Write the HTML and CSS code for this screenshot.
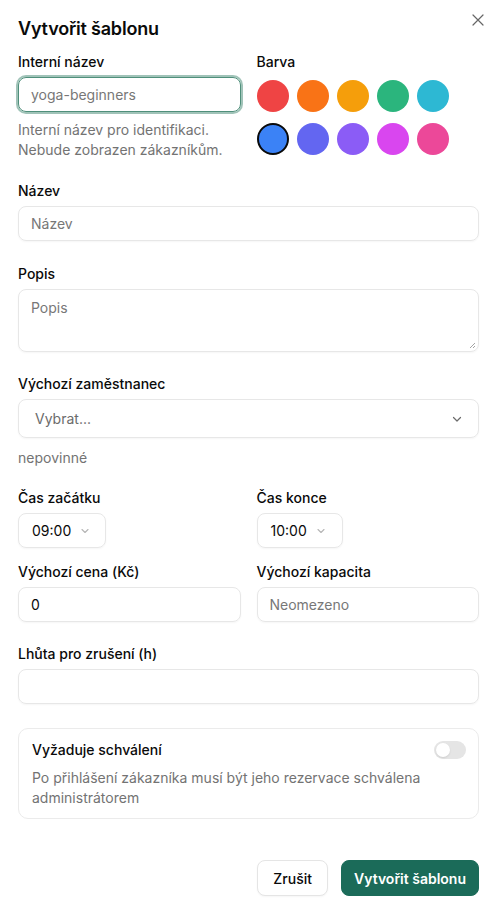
FILE: index.html
```html
<!DOCTYPE html>
<html lang="cs">
<head>
<meta charset="utf-8">
<link rel="stylesheet" href="styles.css">
</head>
<body>
<div class="dialog">
  <button class="close" aria-label="Zavřít">
    <svg width="14" height="14" viewBox="0 0 14 14"><path d="M2 2L12 12M12 2L2 12" stroke="#666" stroke-width="1.2" stroke-linecap="round" fill="none"/></svg>
  </button>
  <h1 class="title">Vytvořit šablonu</h1>

  <div class="top">
    <div class="col">
      <label class="label">Interní název</label>
      <div class="input focus"><span class="ph">yoga-beginners</span></div>
      <p class="help">Interní název pro identifikaci.<br>Nebude zobrazen zákazníkům.</p>
    </div>
    <div class="col">
      <label class="label">Barva</label>
      <div class="swatches">
        <span class="sw red"></span>
        <span class="sw orange"></span>
        <span class="sw amber"></span>
        <span class="sw green"></span>
        <span class="sw cyan"></span>
        <span class="sw blue selected"></span>
        <span class="sw indigo"></span>
        <span class="sw violet"></span>
        <span class="sw fuchsia"></span>
        <span class="sw pink"></span>
      </div>
    </div>
  </div>

  <div class="field f-nazev">
    <label class="label">Název</label>
    <div class="input"><span class="ph">Název</span></div>
  </div>

  <div class="field f-popis">
    <label class="label">Popis</label>
    <div class="textarea"><span class="ph">Popis</span>
      <svg class="grip" width="8" height="8" viewBox="0 0 8 8"><path d="M7 2L2 7M7 5L5 7" stroke="#9a9a9a" stroke-width="0.9" fill="none"/></svg>
    </div>
  </div>

  <div class="field f-emp">
    <label class="label">Výchozí zaměstnanec</label>
    <div class="select"><span class="ph2">Vybrat...</span>
      <svg width="12" height="12" viewBox="0 0 12 12"><path d="M2.5 4.5L6 8L9.5 4.5" stroke="#6b6b6b" stroke-width="1.2" fill="none" stroke-linecap="round" stroke-linejoin="round"/></svg>
    </div>
    <p class="muted">nepovinné</p>
  </div>

  <div class="row f-time">
    <div class="field">
      <label class="label">Čas začátku</label>
      <div class="time w1"><span>09:00</span>
        <svg width="10" height="10" viewBox="0 0 10 10"><path d="M2 3.5L5 6.5L8 3.5" stroke="#b5b5b5" stroke-width="1.1" fill="none" stroke-linecap="round" stroke-linejoin="round"/></svg>
      </div>
    </div>
    <div class="field">
      <label class="label">Čas konce</label>
      <div class="time w2"><span>10:00</span>
        <svg width="10" height="10" viewBox="0 0 10 10"><path d="M2 3.5L5 6.5L8 3.5" stroke="#b5b5b5" stroke-width="1.1" fill="none" stroke-linecap="round" stroke-linejoin="round"/></svg>
      </div>
    </div>
  </div>

  <div class="row f-price">
    <div class="field">
      <label class="label">Výchozí cena (Kč)</label>
      <div class="input"><span class="val">0</span></div>
    </div>
    <div class="field">
      <label class="label">Výchozí kapacita</label>
      <div class="input"><span class="ph">Neomezeno</span></div>
    </div>
  </div>

  <div class="field f-lhuta">
    <label class="label">Lhůta pro zrušení (h)</label>
    <div class="input"></div>
  </div>

  <div class="card">
    <div class="card-head">
      <span class="card-title">Vyžaduje schválení</span>
      <span class="toggle"><span class="knob"></span></span>
    </div>
    <p class="card-text">Po přihlášení zákazníka musí být jeho rezervace schválena administrátorem</p>
  </div>

  <div class="actions">
    <button class="btn secondary">Zrušit</button>
    <button class="btn primary">Vytvořit šablonu</button>
  </div>
</div>
</body>
</html>
```

FILE: styles.css
```css
* { box-sizing: border-box; }
html, body { margin: 0; padding: 0; background: #fff; }
body {
  font-family: Inter, "Noto Sans", sans-serif;
  color: #0a0a0a;
  font-size: 14px;
}
.dialog {
  position: relative;
  padding: 15px 18px 16px 18px;
  display: flex;
  flex-direction: column;
}
.close {
  position: absolute;
  top: 12px;
  right: 11px;
  width: 16px;
  height: 16px;
  padding: 0;
  border: 0;
  background: none;
  display: flex;
  align-items: center;
  justify-content: center;
}
.title {
  margin: 0;
  font-size: 18px;
  line-height: 28px;
  font-weight: 600;
  letter-spacing: -0.2px;
}
.top {
  margin-top: 9px;
  display: grid;
  grid-template-columns: 1fr 1fr;
  column-gap: 16px;
}
.col { display: flex; flex-direction: column; }
.label {
  display: block;
  font-size: 14px;
  line-height: 20px;
  height: 20px;
  font-weight: 500;
}
.input {
  margin-top: 5px;
  height: 35px;
  border: 1px solid #e7e7e7;
  border-radius: 8px;
  box-shadow: 0 1px 2px rgba(0,0,0,0.04);
  display: flex;
  align-items: center;
  padding: 0 12px;
  font-size: 14px;
}
.input.focus {
  border-color: #4f8f7b;
  box-shadow: 0 0 0 2px rgba(82,146,126,0.55);
}
.ph { color: #777; }
.val { color: #0a0a0a; }
.help {
  margin: 8px 0 0;
  color: #737373;
  font-size: 14px;
  line-height: 20px;
}
.swatches {
  margin-top: 8px;
  display: grid;
  grid-template-columns: repeat(5, 32px);
  column-gap: 8px;
  row-gap: 11px;
}
.sw {
  width: 32px;
  height: 32px;
  border-radius: 50%;
  display: block;
}
.red { background: #ef4444; }
.orange { background: #f97316; }
.amber { background: #f59e0b; }
.green { background: #2bb57d; }
.cyan { background: #2db8d3; }
.blue { background: #3b82f6; }
.indigo { background: #6366f1; }
.violet { background: #8b5cf6; }
.fuchsia { background: #d946ef; }
.pink { background: #ec4899; }
.sw.selected { border: 2px solid #0a0a0a; }

.field { display: flex; flex-direction: column; }
.f-nazev { margin-top: 21px; }
.f-popis { margin-top: 23px; }
.textarea {
  position: relative;
  margin-top: 5px;
  height: 63px;
  border: 1px solid #e7e7e7;
  border-radius: 8px;
  box-shadow: 0 1px 2px rgba(0,0,0,0.04);
  padding: 8px 12px;
  line-height: 20px;
}
.grip { position: absolute; right: 2px; bottom: 2px; }
.f-emp { margin-top: 22px; }
.select {
  margin-top: 5px;
  height: 39px;
  border: 1px solid #e7e7e7;
  border-radius: 8px;
  box-shadow: 0 1px 2px rgba(0,0,0,0.04);
  display: flex;
  align-items: center;
  justify-content: space-between;
  padding: 0 15px 0 16px;
}
.ph2 { color: #6b6b6b; }
.muted {
  margin: 10px 0 0;
  color: #737373;
  line-height: 20px;
}
.row {
  display: grid;
  grid-template-columns: 1fr 1fr;
  column-gap: 16px;
}
.f-time { margin-top: 20px; }
.time {
  margin-top: 5px;
  height: 35px;
  border: 1px solid #e7e7e7;
  border-radius: 8px;
  box-shadow: 0 1px 2px rgba(0,0,0,0.04);
  display: flex;
  align-items: center;
  gap: 9px;
  padding: 0 12px 0 13px;
  font-size: 14px;
}
.w1 { width: 88px; }
.w2 { width: 86px; }
.f-price { margin-top: 14px; }
.f-lhuta { margin-top: 22px; }
.card {
  margin-top: 24px;
  border: 1px solid #ebebeb;
  border-radius: 10px;
  padding: 11px 12px 10px 13px;
}
.card-head {
  display: flex;
  align-items: center;
  justify-content: space-between;
}
.card-title { font-weight: 500; line-height: 20px; }
.toggle {
  width: 32px;
  height: 18px;
  border-radius: 9px;
  background: #e5e5e5;
  display: flex;
  align-items: center;
  padding: 2px;
}
.knob {
  width: 14px;
  height: 14px;
  border-radius: 50%;
  background: #fff;
  box-shadow: 0 1px 2px rgba(0,0,0,0.1);
}
.card-text {
  margin: 8px 0 0;
  color: #737373;
  line-height: 20px;
}
.actions {
  margin-top: 41px;
  display: flex;
  justify-content: flex-end;
  gap: 13px;
}
.btn {
  font-family: inherit;
  font-size: 14px;
  height: 36px;
  border-radius: 8px;
  padding: 0 15px;
  font-weight: 500;
}
.secondary {
  background: #fff;
  border: 1px solid #e5e5e5;
  color: #0a0a0a;
  box-shadow: 0 1px 2px rgba(0,0,0,0.04);
}
.primary {
  background: #1b6b59;
  border: 1px solid #1b6b59;
  color: #fff;
  font-weight: 600;
  padding: 0 12px;
}
```
